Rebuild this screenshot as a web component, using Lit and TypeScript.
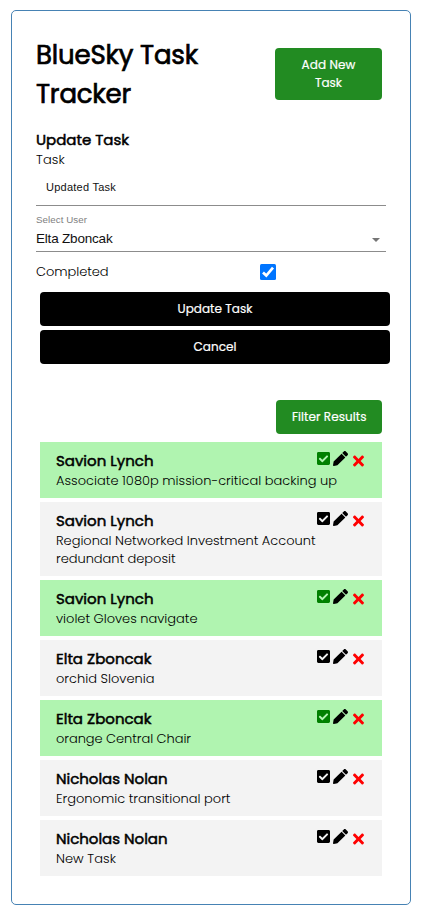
import { LitElement, html, css, svg } from "lit";
import { customElement, property, state } from "lit/decorators.js";
import { classMap } from "lit/directives/class-map.js";

/** A single line of text, tracked so that it spans a set measure. */
@customElement("tracked-text")
export class TrackedText extends LitElement {
  @property() text = "";
  @property({ type: Number }) measure = 0;
  @state() private spacing = 0;

  static styles = css`
    :host { display: inline-block; white-space: pre; vertical-align: top; }
    .run { display: inline-block; }
  `;

  firstUpdated() {
    const run = this.renderRoot.querySelector(".run") as HTMLElement;
    const natural = run.getBoundingClientRect().width;
    this.spacing = (this.measure - natural) / this.text.length;
  }

  render() {
    return html`<span class="run" style="letter-spacing:${this.spacing}px">${this.text}</span>`;
  }
}

const t = (text: string, measure: number) =>
  html`<tracked-text .text=${text} .measure=${measure}></tracked-text>`;

type Line = [string, number];
interface Task { user: Line; lines: Line[]; done: boolean; }

const savion: Line = ["Savion Lynch", 97.5];
const elta: Line = ["Elta Zboncak", 95.5];
const nicholas: Line = ["Nicholas Nolan", 111.5];

const tasks: Task[] = [
  { user: savion, lines: [["Associate 1080p mission-critical backing up", 281]], done: true },
  { user: savion, lines: [["Regional Networked Investment Account", 259.5], ["redundant deposit", 119.5]], done: false },
  { user: savion, lines: [["violet Gloves navigate", 141.5]], done: true },
  { user: elta, lines: [["orchid Slovenia", 98.5]], done: false },
  { user: elta, lines: [["orange Central Chair", 135]], done: true },
  { user: nicholas, lines: [["Ergonomic transitional port", 174.5]], done: false },
  { user: nicholas, lines: [["New Task", 60]], done: false },
];

const checkIcon = svg`<path d="M400 480H48c-26.510 0-48-21.490-48-48V80c0-26.510 21.490-48 48-48h352c26.510 0 48 21.490 48 48v352c0 26.510-21.490 48-48 48zm-204.686-98.059l184-184c6.248-6.248 6.248-16.379 0-22.627l-22.627-22.627c-6.248-6.248-16.379-6.249-22.628 0L184 302.745l-70.059-70.059c-6.248-6.248-16.379-6.248-22.628 0l-22.627 22.627c-6.248 6.248-6.248 16.379 0 22.627l104 104c6.249 6.250 16.379 6.250 22.628.001z"/>`;
const pencilIcon = svg`<path d="M497.900 142.100l-46.100 46.100c-4.700 4.700-12.300 4.700-17 0l-111-111c-4.700-4.700-4.700-12.300 0-17l46.100-46.100c18.700-18.700 49.100-18.700 67.900 0l60.100 60.100c18.800 18.700 18.800 49.100 0 67.900zM284.200 99.800L21.600 362.400.400 483.900c-2.900 16.400 11.400 30.600 27.800 27.800l121.500-21.300 262.600-262.600c4.700-4.700 4.700-12.300 0-17l-111-111c-4.800-4.700-12.400-4.700-17.100 0z"/>`;
const crossIcon = svg`<path d="M242.720 256l100.070-100.070c12.280-12.280 12.280-32.190 0-44.480l-22.240-22.240c-12.280-12.280-32.190-12.280-44.480 0L176 189.280 75.930 89.210c-12.280-12.280-32.190-12.280-44.480 0L9.210 111.450c-12.280 12.280-12.280 32.190 0 44.480L109.280 256 9.210 356.070c-12.280 12.280-12.280 32.190 0 44.480l22.240 22.240c12.280 12.280 32.200 12.280 44.480 0L176 322.720l100.070 100.070c12.280 12.280 32.200 12.280 44.480 0l22.240-22.240c12.280-12.280 12.280-32.190 0-44.480L242.720 256z"/>`;

@customElement("app-root")
export class AppRoot extends LitElement {
  static styles = css`
    :host {
      display: block;
      box-sizing: border-box;
      padding: 10px 12px 7px 11px;
      height: 912px;
      background: #fff;
      color: #000;
      font-family: Poppins, Inter, "Open Sans", sans-serif;
      font-feature-settings: "cv11";
      font-size: 13px;
      font-weight: 300;
      line-height: 18px;
    }
    .card {
      box-sizing: border-box;
      height: 895px;
      border: 1px solid steelblue;
      border-radius: 5px;
      padding: 24px 24px 0;
    }
    .header { display: flex; justify-content: space-between; padding-right: 4px; }
    h1 { box-sizing: border-box; height: 78px; margin: 0; padding-top: 1px; font-size: 26px; font-weight: 400; line-height: 39px; -webkit-text-stroke: 0.7px #000; }
    h1 tracked-text, .lines tracked-text { display: block; }
    button {
      display: block;
      box-sizing: border-box;
      border: 0;
      border-radius: 4px;
      margin: 0;
      padding: 8px 16px;
      height: 34px;
      color: #fff;
      font: 400 12px/18px Poppins, Inter, "Open Sans", sans-serif;
      -webkit-text-stroke: 0.2px #fff;
      font-feature-settings: "cv11";
      text-align: center;
    }
    .green { background: forestgreen; }
    .add { width: 107px; height: 52px; margin-top: 13px; }
    .dark { background: #000; width: 350px; margin: 0 0 4px 4px; }
    h3 { margin: 0; font-size: 15px; font-weight: 400; line-height: 21px; -webkit-text-stroke: 0.5px #000; }
    .form h3 { margin-top: 17px; line-height: 20px; }
    .label { height: 19px; line-height: 19px; }
    .input, .select {
      box-sizing: border-box;
      width: 350px;
      border-bottom: 1px solid #8c8c8c;
      color: #111;
      font-family: "Liberation Sans", Arial, sans-serif;
      font-weight: 400;
    }
    .input { height: 37px; padding: 9px 10px 0; font-size: 11px; line-height: 18px; }
    .select { height: 46px; padding-top: 7px; }
    .caption { color: #808080; font-size: 9.750px; line-height: 14px; }
    .value { display: flex; justify-content: space-between; align-items: center; font-size: 13.500px; line-height: 24px; }
    .arrow {
      border: 4px solid transparent;
      border-top-color: #757575;
      border-bottom: 0;
      margin: 1px 6px 0 0;
    }
    .completed { display: flex; height: 40px; align-items: center; }
    .completed .name { width: 224px; }
    .box { display: block; width: 16px; height: 16px; }
    .filter { display: flex; justify-content: flex-end; padding: 32px 4px 8px 0; }
    .filter button { width: 106px; }
    .list { display: flex; flex-direction: column; gap: 4px; margin-left: 4px; width: 342px; }
    .task {
      display: flex;
      box-sizing: border-box;
      justify-content: space-between;
      padding: 8px 18px 8px 16px;
      background: #f3f3f3;
    }
    .task.done { background: #b0f4b0; }
    .lines { width: 0; }
    .lines h3 { height: 22px; }
    .icons { display: flex; height: 18px; }
    .icons svg { display: block; }
    .check { width: 13px; height: 15px; margin: 1px 3px 0 0; }
    .done .check { fill: green; }
    .pencil { width: 15px; height: 15px; margin: 1px 5px 0 0; }
    .cross { width: 11px; height: 16px; margin-top: 3px; fill: red; }
  `;

  render() {
    return html`
      <div class="card">
        <div class="header">
          <h1>${t("BlueSky Task", 162)}${t("Tracker", 95)}</h1>
          <button class="green add">${t("Add New", 54)}<br />${t("Task", 27)}</button>
        </div>
        <div class="form">
          <h3>${t("Update Task", 93)}</h3>
          <div class="label">${t("Task", 29)}</div>
          <div class="input">${t("Updated Task", 70)}</div>
          <div class="select">
            <div class="caption">${t("Select User", 51)}</div>
            <div class="value">${t("Elta Zboncak", 76.5)}<span class="arrow"></span></div>
          </div>
          <div class="completed">
            <span class="name">${t("Completed", 72.5)}</span>
            <svg class="box" viewBox="0 0 16 16">
              <rect width="16" height="16" rx="1.500" fill="#0075ff" />
              <path d="M3 8.500L6.300 11.600L13 3.700" fill="none" stroke="#fff" stroke-width="2.700" />
            </svg>
          </div>
          <button class="dark">${t("Update Task", 75)}</button>
          <button class="dark">${t("Cancel", 43)}</button>
        </div>
        <div class="filter"><button class="green">${t("Filter Results", 74.5)}</button></div>
        <div class="list">
          ${tasks.map(
            (task) => html`
              <div class=${classMap({ task: true, done: task.done })}>
                <div class="lines">
                  <h3>${t(...task.user)}</h3>
                  ${task.lines.map((line) => t(...line))}
                </div>
                <div class="icons">
                  <svg class="check" viewBox="0 0 448 512">${checkIcon}</svg>
                  <svg class="pencil" viewBox="0 0 512 512">${pencilIcon}</svg>
                  <svg class="cross" viewBox="0 0 352 512">${crossIcon}</svg>
                </div>
              </div>
            `
          )}
        </div>
      </div>
    `;
  }
}
